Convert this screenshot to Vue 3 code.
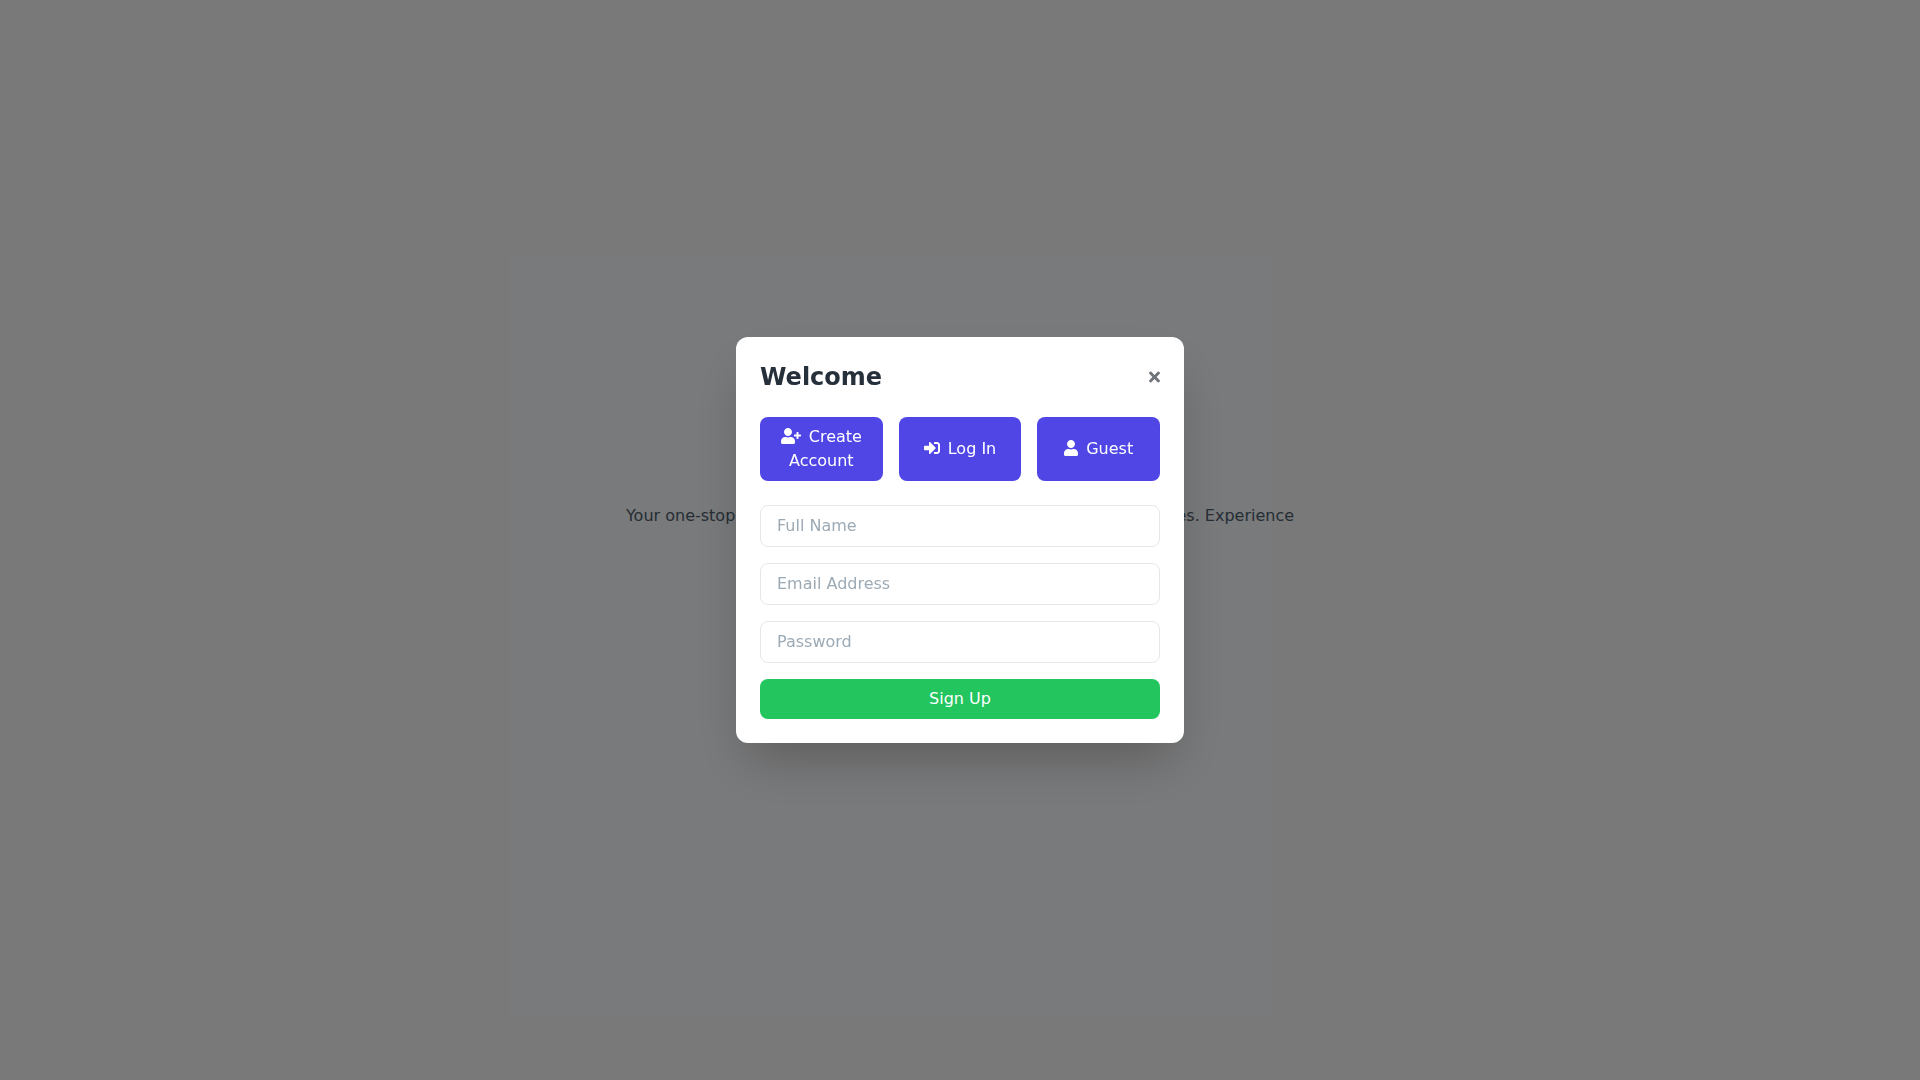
<script setup>
import { ref } from 'vue'

const fullName = ref('')
const email = ref('')
const password = ref('')
</script>

<template>
  <main class="page">
    <div class="panel" aria-hidden="true"></div>
    <p class="intro">
      Your one-stop shop for the best products and latest offers at low prices. Experience
    </p>
    <div class="overlay">
      <section class="modal" role="dialog" aria-modal="true" aria-labelledby="modal-title">
        <header class="modal-header">
          <h2 id="modal-title">Welcome</h2>
          <button type="button" class="close" aria-label="Close">
            <svg class="icon icon-close" viewBox="0 0 352 512" aria-hidden="true">
              <path d="M242.72 256l100.07-100.07c12.28-12.28 12.28-32.19 0-44.48l-22.24-22.24c-12.28-12.28-32.19-12.28-44.48 0L176 189.28 75.93 89.21c-12.28-12.28-32.19-12.28-44.48 0L9.21 111.45c-12.28 12.28-12.28 32.19 0 44.48L109.28 256 9.21 356.07c-12.28 12.28-12.28 32.19 0 44.48l22.24 22.24c12.28 12.28 32.2 12.28 44.48 0L176 322.72l100.07 100.07c12.28 12.28 32.2 12.28 44.48 0l22.24-22.24c12.28-12.28 12.28-32.19 0-44.48L242.72 256z" />
            </svg>
          </button>
        </header>
        <div class="tabs">
          <button type="button" class="tab">
            <svg class="icon icon-add" viewBox="0 0 640 512" aria-hidden="true">
              <path d="M624 208h-64v-64c0-8.800-7.200-16-16-16h-32c-8.800 0-16 7.200-16 16v64h-64c-8.800 0-16 7.200-16 16v32c0 8.800 7.200 16 16 16h64v64c0 8.800 7.200 16 16 16h32c8.800 0 16-7.200 16-16v-64h64c8.800 0 16-7.200 16-16v-32c0-8.800-7.200-16-16-16zm-400 48c70.700 0 128-57.300 128-128S294.700 0 224 0 96 57.300 96 128s57.300 128 128 128zm89.600 32h-16.700c-22.200 10.200-46.900 16-72.900 16s-50.600-5.800-72.900-16h-16.700C60.200 288 0 348.200 0 422.400V464c0 26.500 21.500 48 48 48h352c26.500 0 48-21.500 48-48v-41.600c0-74.200-60.200-134.400-134.400-134.400z" />
            </svg>Create Account
          </button>
          <button type="button" class="tab">
            <svg class="icon icon-login" viewBox="0 0 512 512" aria-hidden="true">
              <path d="M416 448h-84c-6.600 0-12-5.400-12-12v-40c0-6.600 5.400-12 12-12h84c17.700 0 32-14.300 32-32V160c0-17.700-14.300-32-32-32h-84c-6.600 0-12-5.400-12-12V76c0-6.600 5.400-12 12-12h84c53 0 96 43 96 96v192c0 53-43 96-96 96zm-47-209L201 71c-15-15-41-4.500-41 17v96H24c-13.300 0-24 10.700-24 24v96c0 13.300 10.700 24 24 24h136v96c0 21.500 26 32 41 17l168-168c9.300-9.400 9.300-24.600 0-34z" />
            </svg>Log In
          </button>
          <button type="button" class="tab">
            <svg class="icon icon-user" viewBox="0 0 448 512" aria-hidden="true">
              <path d="M224 256c70.700 0 128-57.300 128-128S294.700 0 224 0 96 57.300 96 128s57.300 128 128 128zm89.600 32h-16.700c-22.200 10.200-46.900 16-72.900 16s-50.600-5.800-72.900-16h-16.700C60.200 288 0 348.200 0 422.400V464c0 26.500 21.500 48 48 48h352c26.500 0 48-21.500 48-48v-41.600c0-74.200-60.200-134.400-134.400-134.400z" />
            </svg>Guest
          </button>
        </div>
        <form class="form" @submit.prevent>
          <input v-model="fullName" type="text" placeholder="Full Name" aria-label="Full Name" />
          <input v-model="email" type="email" placeholder="Email Address" aria-label="Email Address" />
          <input v-model="password" type="password" placeholder="Password" aria-label="Password" />
          <button type="submit" class="submit">Sign Up</button>
        </form>
      </section>
    </div>
  </main>
</template>

<style>
body {
  margin: 0;
}
</style>

<style scoped>
.page {
  position: relative;
  min-height: 100vh;
  overflow: hidden;
  background: #f3f3f3;
  color: #4b5b6b;
  font-family: "DejaVu Sans", sans-serif;
  font-size: 16px;
  line-height: 24px;
  box-sizing: border-box;
  padding-top: 504px;
}

.panel {
  position: absolute;
  left: 509px;
  top: 255px;
  width: 763px;
  height: 763px;
  background: #f3f4f6;
}

.intro {
  position: relative;
  max-width: 672px;
  margin: 0 auto;
  text-align: center;
}

.overlay {
  position: fixed;
  inset: 0;
  display: flex;
  align-items: center;
  justify-content: center;
  background: rgba(0, 0, 0, 0.5);
}

.modal {
  box-sizing: border-box;
  width: 100%;
  max-width: 448px;
  padding: 24px;
  border-radius: 12px;
  background: #fff;
  box-shadow: 0 25px 50px -12px rgba(0, 0, 0, 0.25);
}

.modal-header {
  display: flex;
  align-items: center;
  justify-content: space-between;
  margin-bottom: 24px;
}

h2 {
  margin: 0;
  color: #26303a;
  font-size: 24px;
  font-weight: 700;
  line-height: 32px;
}

button,
input {
  box-sizing: border-box;
  margin: 0;
  font: inherit;
}

button {
  border: 0;
  cursor: pointer;
}

.close {
  display: flex;
  padding: 0;
  background: transparent;
  color: #70757a;
}

.icon {
  display: inline-block;
  height: 16px;
  fill: currentColor;
  vertical-align: -2px;
}

.icon-close {
  width: 11px;
}

.icon-add {
  width: 20px;
}

.icon-login {
  width: 16px;
}

.icon-user {
  width: 14px;
}

.tabs {
  display: flex;
  gap: 16px;
  margin-bottom: 24px;
}

.tab {
  flex: 1 1 0;
  min-width: 0;
  padding: 8px 16px;
  border-radius: 8px;
  background: #4f46e5;
  color: #fff;
  text-align: center;
}

.tab .icon {
  margin-right: 8px;
}

.form {
  display: flex;
  flex-direction: column;
  gap: 16px;
}

input {
  width: 100%;
  height: 42px;
  padding: 7px 16px 9px;
  border: 1px solid #e5e7eb;
  border-radius: 8px;
  background: #fff;
  color: #1f2937;
}

input::placeholder {
  color: #9caab5;
  opacity: 1;
}

.submit {
  width: 100%;
  padding: 8px 16px;
  border-radius: 8px;
  background: #22c55e;
  color: #fff;
}
</style>
